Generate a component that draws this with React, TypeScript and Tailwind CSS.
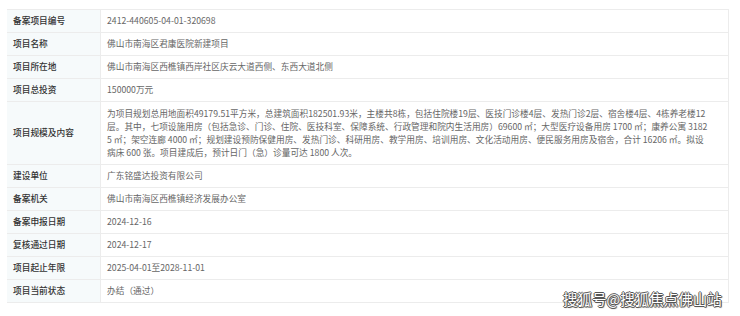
const rows: { label: string; value: string; lines?: string[] }[] = [
  { label: "备案项目编号", value: "2412-440605-04-01-320698" },
  { label: "项目名称", value: "佛山市南海区君康医院新建项目" },
  { label: "项目所在地", value: "佛山市南海区西樵镇西岸社区庆云大道西侧、东西大道北侧" },
  { label: "项目总投资", value: "150000万元" },
  {
    label: "项目规模及内容",
    value: "",
    lines: [
      "为项目规划总用地面积49179.51平方米，总建筑面积182501.93米，主楼共8栋，包括住院楼19层、医技门诊楼4层、发热门诊2层、宿舍楼4层、4栋养老楼12",
      "层。其中，七项设施用房（包括急诊、门诊、住院、医技科室、保障系统、行政管理和院内生活用房）69600 ㎡；大型医疗设备用房 1700 ㎡；康养公寓 3182",
      "5 ㎡；架空连廊 4000 ㎡；规划建设预防保健用房、发热门诊、科研用房、教学用房、培训用房、文化活动用房、便民服务用房及宿舍，合计 16206 ㎡。拟设",
      "病床 600 张。项目建成后，预计日门（急）诊量可达 1800 人次。",
    ],
  },
  { label: "建设单位", value: "广东铭盛达投资有限公司" },
  { label: "备案机关", value: "佛山市南海区西樵镇经济发展办公室" },
  { label: "备案申报日期", value: "2024-12-16" },
  { label: "复核通过日期", value: "2024-12-17" },
  { label: "项目起止年限", value: "2025-04-01至2028-11-01" },
  { label: "项目当前状态", value: "办结（通过）" },
];

export default function App() {
  return (
    <div
      className="relative w-[740px] h-[316px] bg-white overflow-hidden pt-[9px] pl-[7px]"
      style={{ fontFamily: '"Noto Sans CJK SC", "Noto Sans", sans-serif' }}
    >
      <div className="w-[722px] border-t border-r border-[#ececec] text-[8.7px]">
        {rows.map((r) => (
          <div
            key={r.label}
            className={`flex border-b border-[#ececec] ${r.lines ? "h-[63px]" : "h-[23px]"}`}
          >
            <div className="w-[94px] shrink-0 flex items-center pl-[6px] bg-[#f6fafb] border-r border-[#ececec] text-[#333] font-medium">
              {r.label}
            </div>
            {r.lines ? (
              <div className="flex-1 pl-[6px] pt-[5px] leading-[13px] text-[#666]">
                {r.lines.map((l) => (
                  <div key={l} className="whitespace-nowrap">
                    {l}
                  </div>
                ))}
              </div>
            ) : (
              <div className="flex-1 flex items-center pl-[6px] text-[#666]">{r.value}</div>
            )}
          </div>
        ))}
      </div>
      <div
        className="absolute left-[563px] top-[290px] text-[14.5px] leading-[18px] text-white"
        style={{
          textShadow:
            "1px 0 0 #555, -1px 0 0 #555, 0 1px 0 #555, 0 -1px 0 #555, 1px 1px 1px #666",
        }}
      >
        搜狐号@搜狐焦点佛山站
      </div>
    </div>
  );
}
